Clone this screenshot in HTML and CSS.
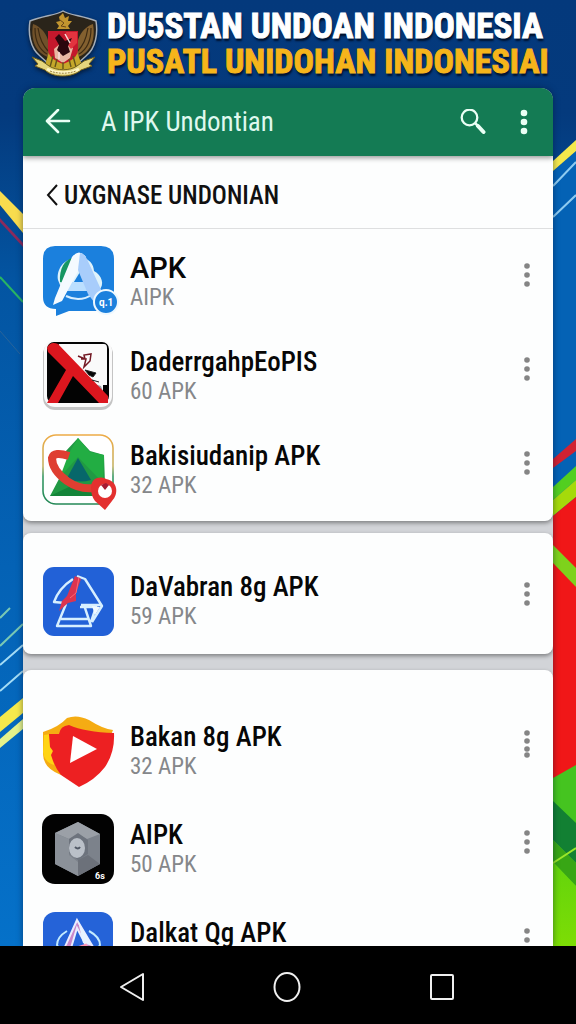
FILE: index.html
```
<!DOCTYPE html>
<html lang="id">
<head>
    <meta charset="UTF-8">
    <meta name="viewport" content="width=device-width, initial-scale=1.0">
    <title>APK Undonian</title>
    <link rel="stylesheet" href="styles.css">
</head>
<body>
    <svg class="backdrop" viewBox="0 0 576 946" preserveAspectRatio="none" aria-hidden="true">
        <defs>
            <linearGradient id="sky" x1="0" y1="0" x2="0" y2="1">
                <stop offset="0" stop-color="#04397c"/>
                <stop offset="0.12" stop-color="#043a7d"/>
                <stop offset="0.3" stop-color="#0355a2"/>
                <stop offset="0.6" stop-color="#0462b5"/>
                <stop offset="1" stop-color="#0571c9"/>
            </linearGradient>
            <linearGradient id="lime" x1="0" y1="0" x2="0" y2="1">
                <stop offset="0" stop-color="#63d40c"/>
                <stop offset="1" stop-color="#7ddd05"/>
            </linearGradient>
        </defs>
        <rect width="576" height="946" fill="url(#sky)"/>
        <!-- left stripes -->
        <path d="M0 191L23 214V233L0 205z" fill="#f8dc4e"/>
        <path d="M0 218L23 243V247L0 222z" fill="#8c2a5c"/>
        <path d="M0 277L23 302" stroke="#29b463" stroke-width="2"/>
        <path d="M0 331L20 354" stroke="#2a649a"/>
        <path d="M0 618L10 608M0 646L23 624" stroke="#79c8b4" stroke-width="2"/>
        <path d="M0 665L23 645M0 691L23 671" stroke="#a4dcf5" stroke-width="2"/>
        <path d="M0 717L23 698V713L0 732z" fill="#f5e94c"/>
        <path d="M0 739L23 719V729L0 748z" fill="#e5f28a"/>
        <!-- right stripes -->
        <path d="M553 171L576 151V510H553z" fill="#0462b5"/>
        <path d="M553 161L576 140V151L553 171z" fill="#f5e94c"/>
        <path d="M553 186L576 162M553 217L576 195" stroke="#8ecbf0" stroke-width="2"/>
        <path d="M553 459L576 439V451L553 468z" fill="#d02232"/>
        <path d="M553 487L576 466V480L553 500z" fill="#52cf20"/>
        <path d="M553 500L576 480V497L553 516z" fill="#a5da0a"/>
        <path d="M553 516L576 497V768L553 780z" fill="#f01718"/>
        <path d="M553 545L576 568V587L553 563z" fill="#7ed21c"/>
        <path d="M553 778L576 765V946H553z" fill="#45c420"/>
        <path d="M553 801L576 823V863L553 840z" fill="#128033"/>
        <path d="M553 840L576 863V886L553 862z" fill="#38a615"/>
        <path d="M553 862L576 886V946H553z" fill="url(#lime)"/>
        <path d="M553 863L576 848" stroke="#9be62a" stroke-width="2"/>
    </svg>

    <header class="banner">
        <svg class="emblem" viewBox="0 0 70 70" aria-hidden="true">
            <path d="M35 2C29 6 14 7 2 12C0 24 2 39 12 47L22 56H48L58 47C68 39 70 24 68 12C56 7 41 6 35 2z" fill="#2a241a" stroke="#a5aeb9" stroke-width="1.5"/>
            <path d="M5 15C2 33 9 44 20 48C24 39 20 20 5 15z" fill="#70512a"/>
            <path d="M65 15C68 33 61 44 50 48C46 39 50 20 65 15z" fill="#83602f"/>
            <path d="M7 19C7 33 12 41 19 45M10 19C12 31 15 36 20 42M63 19C63 33 58 41 51 45M60 19C58 31 55 36 50 42" fill="none" stroke="#3d2a12" stroke-width="1.2"/>
            <path d="M35 4L37 9L41 7L40 12L44 12L40 17L42 20H29L31 17L28 13L32 12L31 8z" fill="#c2952f"/>
            <path d="M32 11L36 14L33 17L38 18" fill="none" stroke="#6b481a"/>
            <path d="M21 43L30 51L40 51L49 43L55 59L45 64H25L16 59z" fill="#c6a82a"/>
            <path d="M20 22H50V40C50 48 43 52 35 55C27 52 20 48 20 40z" fill="#c4182c"/>
            <path d="M26 40L34 33L45 39L42 49L35 54L27 49z" fill="#e8b7a2"/>
            <path d="M38 23H49V34L43 40L39 35z" fill="#e2343f"/>
            <path d="M27 29L31 25L37 32L44 29L40 37L42 43L35 47L29 41L31 36z" fill="#2b070d"/>
            <path d="M37 25L42 34M31 43V50" stroke="#f5ddd9" stroke-width="1.5"/>
            <path d="M25 47L22 58M29 50L27 58M45 47L48 58M41 50L43 58M35 53V60" stroke="#62541a" stroke-width="1.4"/>
            <path d="M4 48L14 52L21 57C29 62 42 62 49 57L56 52L67 48L61 55L64 57L53 61C44 69 25 69 17 61L7 57L10 55z" fill="#e6d67d" stroke="#71601d"/>
            <path d="M19 60C28 65 42 65 51 60" fill="none" stroke="#fff6c6" stroke-width="3"/>
            <path d="M22 62C30 65 40 65 48 62" fill="none" stroke="#988038" stroke-dasharray="2 1"/>
        </svg>
        <h1 class="banner-title">
            <span class="line-white">DU5STAN UNDOAN INDONESIA</span>
            <span class="line-gold">PUSATL UNIDOHAN INDONESIAI</span>
        </h1>
    </header>

    <main class="app">
        <div class="toolbar">
            <button class="icon-button" type="button" aria-label="Back">
                <svg width="26" height="26" viewBox="0 0 26 26" fill="none" stroke="#eafff5" stroke-width="2.6" stroke-linecap="round" stroke-linejoin="round"><path d="M24 12H3M13 1L2 12L13 23"/></svg>
            </button>
            <h2 class="toolbar-title">A IPK Undontian</h2>
            <button class="icon-button" type="button" aria-label="Search">
                <svg width="26" height="26" viewBox="0 0 26 26" fill="none" stroke="#eafff5"><circle cx="9.500" cy="8.500" r="7.800" stroke-width="2.300"/><path d="M15 14L18 17" stroke-width="2.500"/><path d="M18 17L23.500 23" stroke-width="4" stroke-linecap="round"/></svg>
            </button>
            <button class="icon-button" type="button" aria-label="More options">
                <svg width="8" height="26" viewBox="0 0 8 26" fill="#eafff5"><circle cx="4" cy="4" r="3.300"/><circle cx="4" cy="13" r="3.300"/><circle cx="4" cy="22" r="3.300"/></svg>
            </button>
        </div>

        <section class="card card-first">
            <a class="crumb" href="#">
                <svg width="12" height="22" viewBox="0 0 12 22" fill="none" stroke="#111" stroke-width="2"><path d="M11 1L2 11L11 21"/></svg>
                UXGNASE UNDONIAN
            </a>
            <ul class="app-list">
                <li class="app-row">
                    <svg class="app-icon" viewBox="0 0 72 72" aria-hidden="true">
                        <path d="M13 0H59Q72 0 72 13V52Q72 65 59 65H27L14 70V63Q1 63 1 51V13Q1 0 13 0z" fill="#1b80dd"/>
                        <path d="M16 34C14 22 24 11 35 13C44 9 52 17 52 25C60 29 63 39 57 44H20z" fill="#dff3fb"/>
                        <path d="M18 36C17 22 23 14 30 12L22 37z" fill="#159663"/>
                        <path d="M38 26L45 44H27z" fill="#1b80dd"/>
                        <path d="M29 36H47L51 45H24z" fill="#bbdfff"/>
                        <path d="M24 50Q38 57 51 48" fill="none" stroke="#d9efff" stroke-width="2"/>
                        <path d="M30 11Q37 2 44 11L40 18L20 55L11 59L13 52z" fill="#f5faff"/>
                        <path d="M38 7Q42 7 45 13L62 50L58 64L46 48L36 24z" fill="#a8cdfb"/>
                        <circle cx="64" cy="56" r="12" fill="#1b80dd" stroke="#edf8ff" stroke-width="2"/>
                        <text x="57" y="60" class="badge-text">q.1</text>
                    </svg>
                    <div class="app-text"><h3 class="app-name name-large">APK</h3><p class="app-meta">AIPK</p></div>
                    <button class="more" type="button" aria-label="Options for APK"><svg width="6" height="24" viewBox="0 0 6 24"><circle cx="3" cy="3" r="2.800"/><circle cx="3" cy="12" r="2.800"/><circle cx="3" cy="21" r="2.800"/></svg></button>
                </li>
                <li class="app-row">
                    <svg class="app-icon" viewBox="0 0 72 72" aria-hidden="true">
                        <rect x="1" y="2" width="70" height="68" rx="12" fill="#c4c4c4"/>
                        <rect x="2" y="0" width="68" height="67" rx="11" fill="#fafafa"/>
                        <rect x="5" y="2" width="62" height="61" rx="7" fill="#030303"/>
                        <path d="M17 4H62Q65 4 65 8V45H61V54L65 62L14 10z" fill="#fafafa"/>
                        <path d="M46 42L59 46L64 59z" fill="#9ba1ac"/>
                        <path d="M5 8Q8 1 16 4L66 56V63H57L31 36L16 63H5L24 30L6 12z" fill="#dc161e"/>
                        <path d="M36 16L43 19L42 15L49 14L48 21L42 27L44 19L39 19" fill="none" stroke="#721722" stroke-width="1.5"/>
                        <path d="M43 30L54 33L51 37L47 35zM50 40L57 42" fill="#050505" stroke="#222"/>
                    </svg>
                    <div class="app-text"><h3 class="app-name">DaderrgahpEoPIS</h3><p class="app-meta">60 APK</p></div>
                    <button class="more" type="button" aria-label="Options for DaderrgahpEoPIS"><svg width="6" height="24" viewBox="0 0 6 24"><circle cx="3" cy="3" r="2.800"/><circle cx="3" cy="12" r="2.800"/><circle cx="3" cy="21" r="2.800"/></svg></button>
                </li>
                <li class="app-row">
                    <svg class="app-icon" viewBox="0 0 72 72" aria-hidden="true">
                        <defs><linearGradient id="frame" x1="0" y1="0" x2="0" y2="1"><stop offset="0" stop-color="#edab46"/><stop offset="0.45" stop-color="#c6b365"/><stop offset="0.6" stop-color="#369965"/><stop offset="1" stop-color="#258957"/></linearGradient></defs>
                        <rect x="1" y="1" width="70" height="69" rx="13" fill="#fff" stroke="url(#frame)" stroke-width="1.600"/>
                        <path d="M36 4L48 17L62 21L63 50L58 62L8 62L18 43L26 27L23 18z" fill="#219944"/>
                        <path d="M36 4L48 18L62 21L61 49L36 23L18 43L27 19z" fill="#22ad43"/>
                        <path d="M36 24L25 44Q36 50 49 46z" fill="#07676a"/>
                        <path d="M8 62L29 52H56L55 62z" fill="#148439"/>
                        <path d="M27 22Q12 17 10 24Q10 36 25 47Q38 56 52 54" fill="none" stroke="#df3e31" stroke-width="8"/>
                        <path d="M49 54C49 43 59 42 64 45C76 47 77 60 70 67L63 76L53 67Q49 62 49 54z" fill="#e3302f"/>
                        <circle cx="63" cy="57" r="7" fill="#fff"/>
                        <path d="M59 51L63 56L67 51L64 49z" fill="#a51b32"/>
                    </svg>
                    <div class="app-text"><h3 class="app-name">Bakisiudanip APK</h3><p class="app-meta">32 APK</p></div>
                    <button class="more" type="button" aria-label="Options for Bakisiudanip APK"><svg width="6" height="24" viewBox="0 0 6 24"><circle cx="3" cy="3" r="2.800"/><circle cx="3" cy="12" r="2.800"/><circle cx="3" cy="21" r="2.800"/></svg></button>
                </li>
            </ul>
        </section>

        <section class="card card-single">
            <ul class="app-list">
                <li class="app-row">
                    <svg class="app-icon" viewBox="0 0 72 72" aria-hidden="true">
                        <rect x="1" y="2" width="71" height="69" rx="11" fill="#2261d7"/>
                        <g fill="none" stroke="#d7efff" stroke-width="2.400" stroke-linejoin="round">
                            <path d="M35 11L43 14L60 41L50 57M31 14Q17 23 12 37L23 38M39 40H60M42 40L49 61H15L24 39M19 54H46M38 42H54L49 57"/>
                        </g>
                        <path d="M50 41L58 42L53 50z" fill="#f2faff"/>
                        <path d="M33 11L39 14L34 28V36L26 38L17 46L20 36L25 31z" fill="#dc3450"/>
                        <path d="M37 12L34 28L28 33" fill="none" stroke="#ff6973"/>
                    </svg>
                    <div class="app-text"><h3 class="app-name">DaVabran 8g APK</h3><p class="app-meta">59 APK</p></div>
                    <button class="more" type="button" aria-label="Options for DaVabran 8g APK"><svg width="6" height="24" viewBox="0 0 6 24"><circle cx="3" cy="3" r="2.800"/><circle cx="3" cy="12" r="2.800"/><circle cx="3" cy="21" r="2.800"/></svg></button>
                </li>
            </ul>
        </section>

        <section class="card card-last">
            <ul class="app-list">
                <li class="app-row">
                    <svg class="app-icon" viewBox="0 0 72 72" aria-hidden="true">
                        <path d="M1 17Q17 12 25 3Q35-1 47 5Q61 14 71 15L60 42L19 60Q1 53 1 39z" fill="#f5ac13"/>
                        <path d="M2 20L9 19L12 50Q2 47 1 37z" fill="#ffd414"/>
                        <path d="M7 19H17Q18 11 27 10Q43 17 72 18Q73 37 63 52Q53 65 37 72L19 60Q13 53 9 40L11 36L8 32z" fill="#ed2022"/>
                        <path d="M31 21L55 34L28 48z" fill="#fff"/>
                    </svg>
                    <div class="app-text"><h3 class="app-name">Bakan 8g APK</h3><p class="app-meta">32 APK</p></div>
                    <button class="more" type="button" aria-label="Options for Bakan 8g APK"><svg width="6" height="28" viewBox="0 0 6 28"><circle cx="3" cy="3" r="2.800"/><circle cx="3" cy="11" r="2.800"/><circle cx="3" cy="19" r="2.800"/><circle cx="3" cy="25" r="2.800"/></svg></button>
                </li>
                <li class="app-row">
                    <svg class="app-icon" viewBox="0 0 72 72" aria-hidden="true">
                        <rect y="1" width="72" height="70" rx="13" fill="#020202"/>
                        <path d="M36 9L58 21V51L36 63L13 51V20z" fill="#7c828b"/>
                        <path d="M13 20L36 9L58 21L45 26L36 21L27 26z" fill="#9ba0a7"/>
                        <path d="M13 20L27 26V42L36 49V63L13 51z" fill="#8b9199"/>
                        <path d="M58 51L36 63V47L46 42z" fill="#6c717a"/>
                        <path d="M27 26L36 20L46 27V41L36 47L27 40z" fill="#6d737d"/>
                        <ellipse cx="35" cy="35" rx="8" ry="10" fill="#bac0c8"/>
                        <path d="M33 34Q36 37 38 34" fill="none" stroke="#505865" stroke-width="2"/>
                        <text x="53" y="66" class="badge-small">6s</text>
                    </svg>
                    <div class="app-text"><h3 class="app-name">AIPK</h3><p class="app-meta">50 APK</p></div>
                    <button class="more" type="button" aria-label="Options for AIPK"><svg width="6" height="24" viewBox="0 0 6 24"><circle cx="3" cy="3" r="2.800"/><circle cx="3" cy="12" r="2.800"/><circle cx="3" cy="21" r="2.800"/></svg></button>
                </li>
                <li class="app-row">
                    <svg class="app-icon" viewBox="0 0 72 72" aria-hidden="true">
                        <rect x="1" y="1" width="70" height="70" rx="12" fill="#2563d8"/>
                        <path d="M25 20Q15 26 15 34L25 51M47 20Q58 26 58 34L47 51" fill="none" stroke="#c3ebff" stroke-width="2"/>
                        <path d="M35 9L57 46H50L35 17L26 47H18z" fill="#c987ca" stroke="#e9ecff" stroke-width="2"/>
                        <path d="M36 10L50 35L41 32z" fill="#e7f2ff"/>
                        <path d="M24 36L35 37L45 34" fill="none" stroke="#ff95b3" stroke-width="3"/>
                    </svg>
                    <div class="app-text"><h3 class="app-name">Dalkat Qg APK</h3></div>
                    <button class="more" type="button" aria-label="Options for Dalkat Qg APK"><svg width="6" height="24" viewBox="0 0 6 24"><circle cx="3" cy="3" r="2.800"/><circle cx="3" cy="12" r="2.800"/><circle cx="3" cy="21" r="2.800"/></svg></button>
                </li>
            </ul>
        </section>
    </main>

    <nav class="system-bar" aria-label="System">
        <button type="button" aria-label="Back"><svg width="28" height="32" viewBox="0 0 28 32"><path d="M25 3V29L3 16z"/></svg></button>
        <button type="button" aria-label="Home"><svg width="28" height="32" viewBox="0 0 28 32"><ellipse cx="14" cy="16" rx="12.500" ry="14"/></svg></button>
        <button type="button" aria-label="Recent apps"><svg width="28" height="32" viewBox="0 0 28 32"><rect x="3" y="4" width="22" height="24" rx="1"/></svg></button>
    </nav>
</body>
</html>
```
FILE: styles.css
```
* {
    box-sizing: border-box;
}
body {
    font-family: "Roboto Condensed", Roboto, "Liberation Sans", sans-serif;
    margin: 0;
    height: 100vh;
    display: flex;
    flex-direction: column;
    overflow: hidden;
    background-color: #000;
}
h1, h2, h3, p, ul {
    margin: 0;
    padding: 0;
}
ul {
    list-style: none;
}
svg {
    display: block;
}
button {
    background: none;
    border: none;
    padding: 0;
    cursor: pointer;
}
.backdrop {
    position: absolute;
    top: 0;
    left: 0;
    width: 100%;
    height: calc(100vh - 78px);
    z-index: -1;
}
.banner {
    display: flex;
    align-items: center;
    gap: 9px;
    height: 88px;
    padding: 0 28px;
    flex-shrink: 0;
}
.emblem {
    width: 70px;
    height: 70px;
    flex-shrink: 0;
    filter: drop-shadow(0 2px 2px #031a3a);
}
.banner-title {
    font-size: 35px;
    line-height: 34px;
    font-weight: bold;
    white-space: nowrap;
    text-shadow: 1px 3px 2px #01122e;
}
.banner-title span {
    display: block;
}
.line-white {
    color: #fff;
    -webkit-text-stroke: 1px #fff;
}
.line-gold {
    color: #f6b51b;
    font-size: 34px;
    -webkit-text-stroke: 1px #f6b51b;
}
.app {
    flex: 1;
    min-height: 0;
    margin: 0 23px;
    overflow: hidden;
    background-color: #d2d4d8;
    border-radius: 12px 12px 0 0;
    box-shadow: 0 0 6px rgba(0, 20, 50, 0.5);
}
.toolbar {
    display: flex;
    align-items: center;
    height: 68px;
    padding: 0 25px 0 22px;
    background-color: #147b54;
    box-shadow: 0 2px 5px rgba(0, 0, 0, 0.4);
    position: relative;
}
.toolbar-title {
    flex: 1;
    margin-left: 30px;
    color: #dff8ee;
    font-size: 27px;
    font-weight: normal;
}
.icon-button + .icon-button {
    margin-left: 34px;
}
.card {
    background-color: #fdfefe;
    border-radius: 8px;
    box-shadow: 0 2px 4px rgba(0, 0, 0, 0.4);
}
.card-first {
    border-radius: 0 0 8px 8px;
    padding-bottom: 8px;
}
.card-single {
    margin: 12px 0 16px;
    padding: 17px 0 10px;
}
.card-last {
    padding-top: 28px;
}
.card-last .app-row {
    height: 98px;
}
.crumb {
    display: flex;
    align-items: center;
    gap: 6px;
    height: 73px;
    padding: 6px 23px 0;
    border-bottom: 1px solid #dedfe0;
    color: #111;
    font-size: 25px;
    font-weight: 500;
    text-decoration: none;
}
.app-row {
    display: flex;
    align-items: center;
    height: 94px;
    padding: 8px 23px 0 19px;
}
.card-first .app-list {
    padding-top: 2px;
}
.app-icon {
    width: 72px;
    height: 72px;
    flex-shrink: 0;
    overflow: visible;
}
.app-text {
    flex: 1;
    min-width: 0;
    min-height: 60px;
    margin-left: 16px;
}
.app-name {
    color: #070707;
    font-size: 27px;
    line-height: 32px;
    font-weight: 500;
    white-space: nowrap;
}
.name-large {
    font-family: Roboto, "Liberation Sans", sans-serif;
    font-size: 29px;
}
.app-meta {
    color: #85878a;
    font-size: 23px;
    line-height: 28px;
}
.more {
    padding-bottom: 14px;
}
.more svg {
    fill: #858585;
}
.badge-text {
    font: bold 10px Roboto, sans-serif;
    fill: #fff;
}
.badge-small {
    font: bold 9px Roboto, sans-serif;
    fill: #fff;
}
.system-bar {
    display: flex;
    justify-content: space-around;
    align-items: center;
    height: 78px;
    flex-shrink: 0;
    padding: 4px 56px 0 54px;
    background-color: #000;
}
.system-bar svg {
    fill: none;
    stroke: #efefef;
    stroke-width: 2;
    stroke-linejoin: round;
}
```
